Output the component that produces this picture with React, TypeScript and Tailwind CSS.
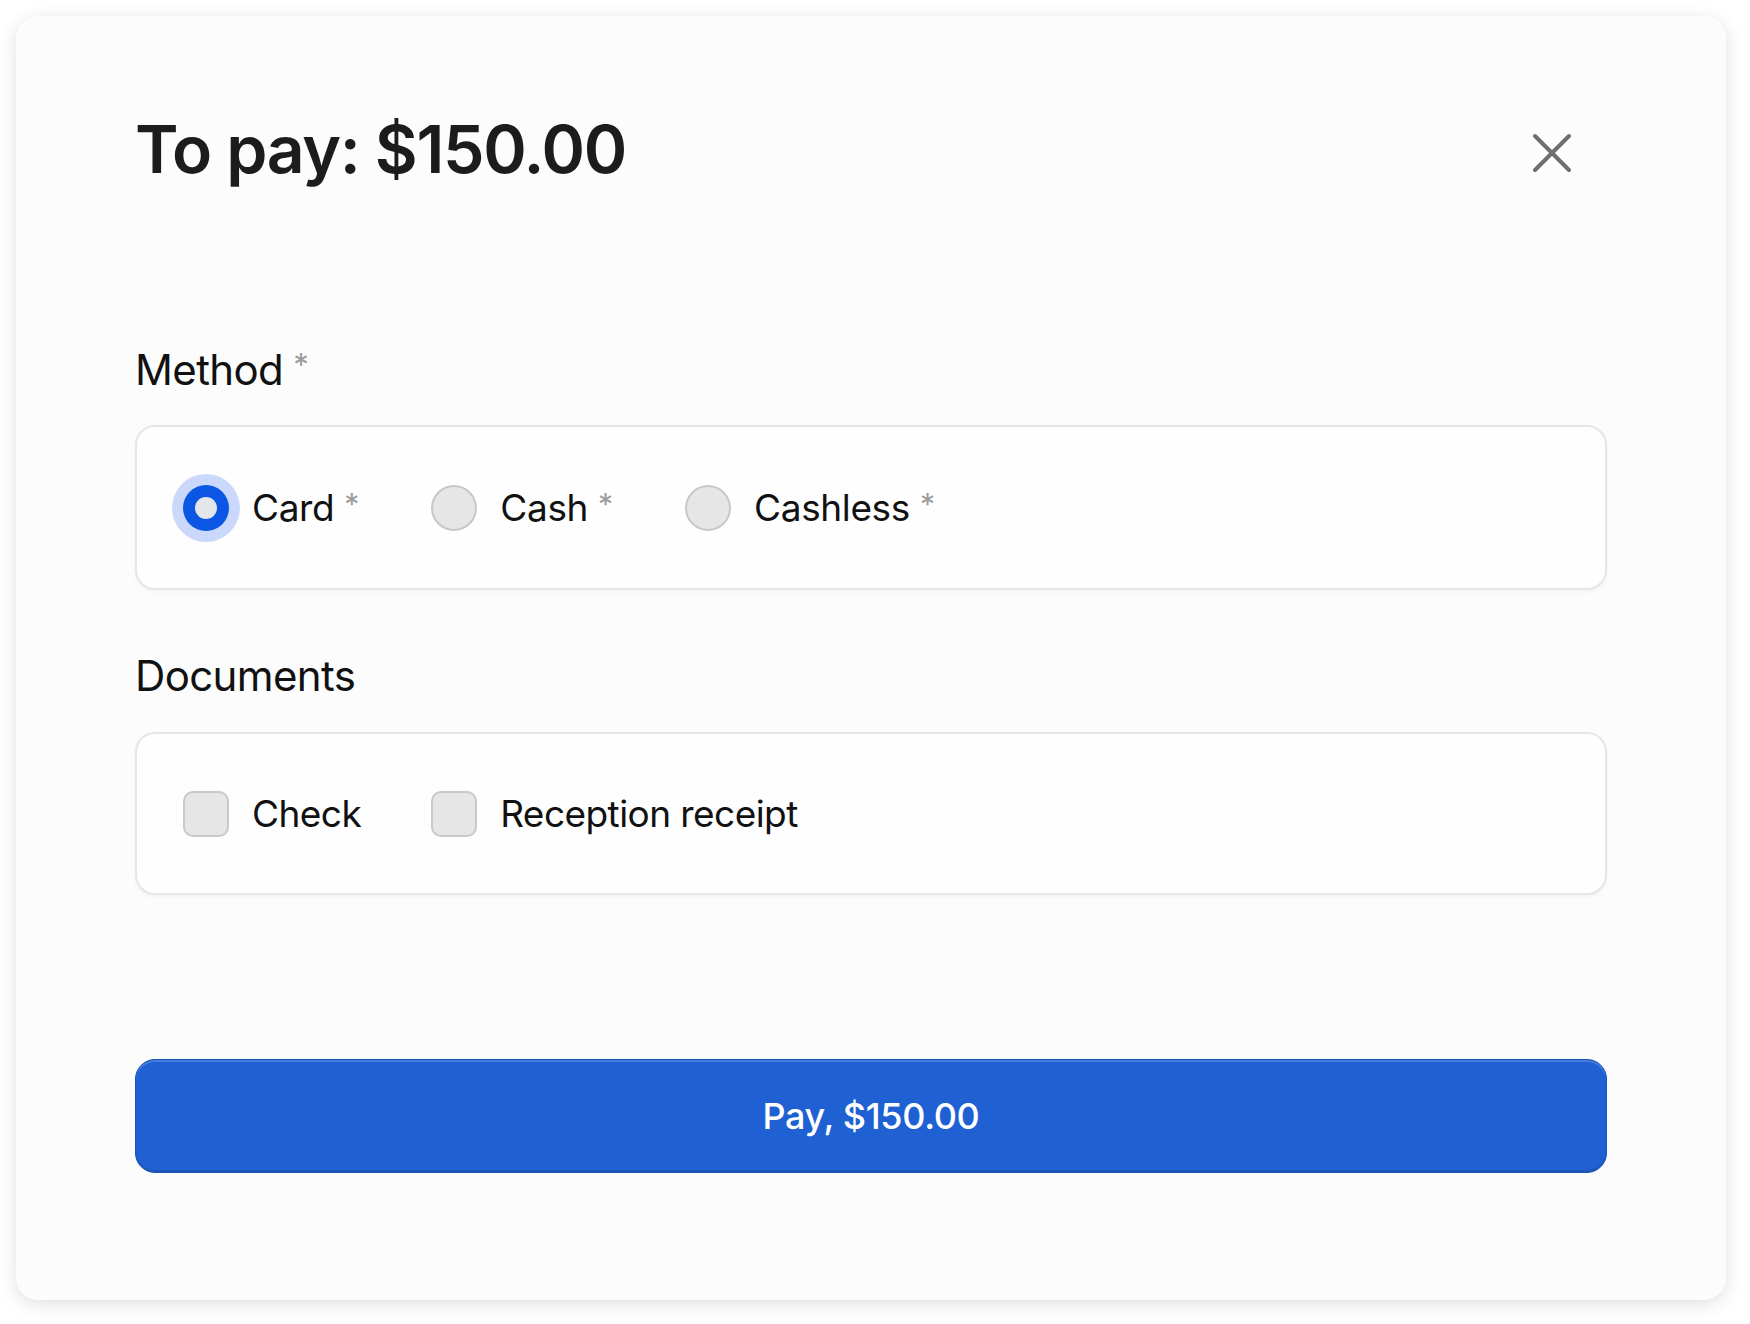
import { useState } from 'react'

const methods = ['Card', 'Cash', 'Cashless'] as const
const documents = ['Check', 'Reception receipt'] as const

function Asterisk({ size }: { size: string }) {
  return <span className={`${size} ml-[10px] leading-none text-[#9b9b9b]`}>*</span>
}

function CloseIcon() {
  return (
    <svg width="40" height="40" viewBox="0 0 40 40" fill="none" stroke="#6e6e6e" strokeWidth="4" strokeLinecap="round">
      <path d="M3 3L37 37" />
      <path d="M37 3L3 37" />
    </svg>
  )
}

export default function App() {
  const [method, setMethod] = useState<string>('Card')
  const [docs, setDocs] = useState<string[]>([])

  return (
    <div className="min-h-screen bg-white p-4 font-['Inter',sans-serif] text-[#111111]">
      <div className="w-[1710px] rounded-[22px] bg-[#fcfcfc] px-[119px] pt-[100px] pb-[127px] shadow-[0_4px_18px_rgba(0,0,0,0.13)]">
        <div className="flex items-start justify-between">
          <h1 className="text-[66px] font-semibold leading-none tracking-[-0.02em] text-[#1c1c1c]">
            To pay: $150.00
          </h1>
          <button className="mt-[17px] mr-[35px] h-10 w-10" aria-label="Close">
            <CloseIcon />
          </button>
        </div>

        <div className="mt-[167px] flex items-start">
          <span className="text-[42px] leading-none tracking-[-0.015em]">Method</span>
          <Asterisk size="text-[31px]" />
        </div>

        <div className="mt-[34px] flex h-[165px] items-center gap-[72px] rounded-[20px] border-2 border-[#e6e6e6] bg-[#fefefe] pl-[46px] shadow-[0_2px_4px_rgba(0,0,0,0.04)]">
          {methods.map((m) => {
            const active = method === m
            return (
              <button key={m} className="flex items-center" onClick={() => setMethod(m)}>
                {active ? (
                  <span className="flex h-[46px] w-[46px] items-center justify-center rounded-full bg-[#0b57e3] shadow-[0_0_0_11px_#c9d8fb]">
                    <span className="h-[22px] w-[22px] rounded-full bg-[#e3e6eb]" />
                  </span>
                ) : (
                  <span className="h-[46px] w-[46px] rounded-full border-2 border-[#c8c8c8] bg-[#e6e6e6]" />
                )}
                <span className="ml-[23px] flex items-start">
                  <span className="text-[37px] leading-none tracking-[-0.01em]">{m}</span>
                  <Asterisk size="text-[30px]" />
                </span>
              </button>
            )
          })}
        </div>

        <div className="mt-[65px] text-[42px] leading-none tracking-[-0.015em]">Documents</div>

        <div className="mt-[35px] flex h-[163px] items-center gap-[70px] rounded-[20px] border-2 border-[#e6e6e6] bg-[#fefefe] pl-[46px] shadow-[0_2px_4px_rgba(0,0,0,0.04)]">
          {documents.map((d) => (
            <button
              key={d}
              className="flex items-center"
              onClick={() => setDocs(docs.includes(d) ? docs.filter((x) => x !== d) : [...docs, d])}
            >
              <span className="h-[46px] w-[46px] rounded-[10px] border-2 border-[#c9c9c9] bg-[#e6e6e6]" />
              <span className="ml-[23px] text-[37px] leading-none tracking-[-0.015em]">{d}</span>
            </button>
          ))}
        </div>

        <button className="mt-[164px] flex h-[114px] w-full items-center justify-center rounded-[20px] border border-[#1a52b8] bg-[#1f61d2] text-[36px] font-medium tracking-[-0.01em] text-white shadow-[inset_0_2px_0_rgba(255,255,255,0.18),inset_0_-2px_0_rgba(0,0,0,0.12)]">
          Pay, $150.00
        </button>
      </div>
    </div>
  )
}
